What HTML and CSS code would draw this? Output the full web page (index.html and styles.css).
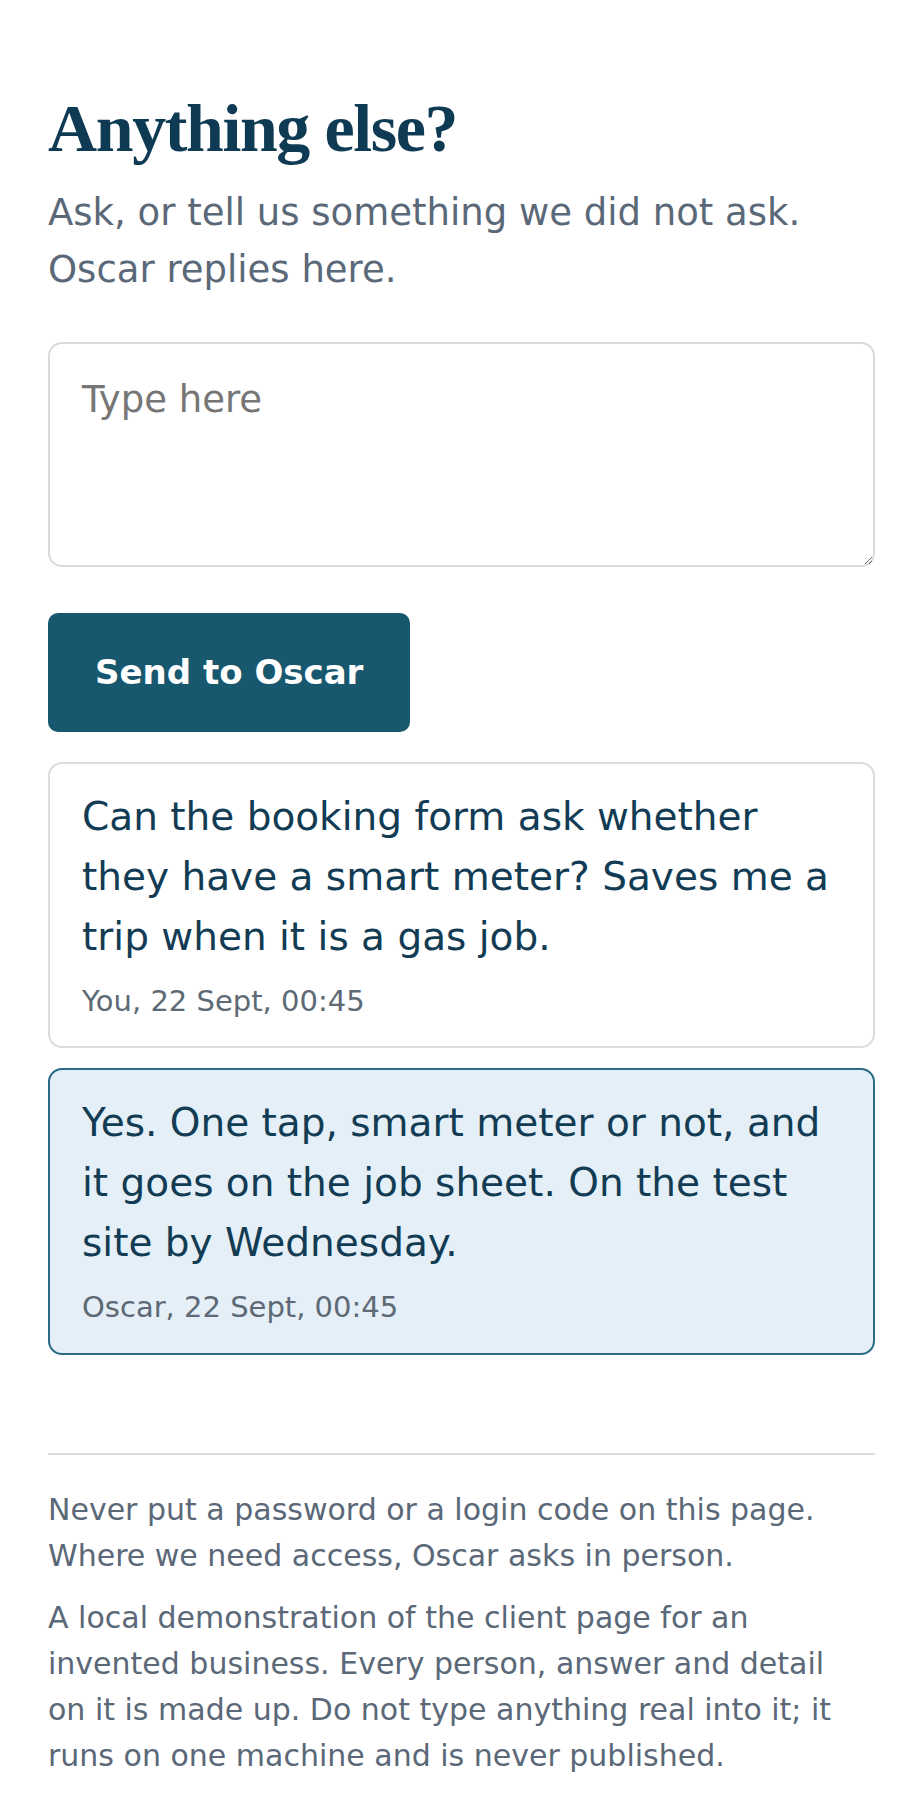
FILE: index.html
```html
<!DOCTYPE html>
<html lang="en">
<head>
<meta charset="utf-8">
<title>Anything else?</title>
<link rel="stylesheet" href="styles.css">
</head>
<body>
<main class="page">
  <h1 class="title">Anything else?</h1>
  <p class="lead">Ask, or tell us something we did not ask. Oscar replies here.</p>

  <form class="ask">
    <textarea class="ask-input" placeholder="Type here"></textarea>
    <button type="button" class="send">Send to Oscar</button>
  </form>

  <div class="thread">
    <div class="msg msg-you">
      <p class="msg-text">Can the booking form ask whether they have a smart meter? Saves me a trip when it is a gas job.</p>
      <p class="msg-meta">You, 22 Sept, 00:45</p>
    </div>
    <div class="msg msg-oscar">
      <p class="msg-text">Yes. One tap, smart meter or not, and it goes on the job sheet. On the test site by Wednesday.</p>
      <p class="msg-meta">Oscar, 22 Sept, 00:45</p>
    </div>
  </div>

  <footer class="foot">
    <p class="foot-text">Never put a password or a login code on this page. Where we need access, Oscar asks in person.</p>
    <p class="foot-text">A local demonstration of the client page for an invented business. Every person, answer and detail on it is made up. Do not type anything real into it; it runs on one machine and is never published.</p>
  </footer>
</main>
</body>
</html>
```
FILE: styles.css
```css
html, body {
  margin: 0;
  padding: 0;
  background: #ffffff;
}

body {
  font-family: "DejaVu Sans", "Noto Sans", sans-serif;
  color: #123b54;
}

.page {
  box-sizing: border-box;
  width: 923px;
  padding: 88px 48px 40px;
}

.title {
  margin: 0 0 14px;
  font-family: "Liberation Serif", "DejaVu Serif", serif;
  font-weight: 700;
  font-size: 68px;
  line-height: 1.2;
  letter-spacing: -1.4px;
  color: #0e3a53;
}

.lead {
  margin: 0;
  font-size: 37px;
  line-height: 57px;
  color: #5a6878;
}

.ask {
  margin: 44px 0 0;
  display: flex;
  flex-direction: column;
  align-items: flex-start;
}

.ask-input {
  box-sizing: border-box;
  display: block;
  width: 100%;
  height: 225px;
  margin: 0;
  padding: 28px 32px;
  border: 2px solid #dadada;
  border-radius: 14px;
  background: #ffffff;
  font-family: "DejaVu Sans", "Noto Sans", sans-serif;
  font-size: 37px;
  line-height: 1.5;
  color: #123b54;
  resize: vertical;
  outline: none;
}

.ask-input::placeholder {
  color: #767676;
  opacity: 1;
}

.send {
  box-sizing: border-box;
  margin-top: 46px;
  height: 119px;
  padding: 0 47px;
  border: none;
  border-radius: 10px;
  background: #17586f;
  color: #ffffff;
  font-family: "DejaVu Sans", "Noto Sans", sans-serif;
  font-weight: 700;
  font-size: 34px;
  line-height: 1;
  cursor: pointer;
}

.thread {
  margin-top: 30px;
  display: flex;
  flex-direction: column;
  gap: 20px;
}

.msg {
  padding: 23px 32px;
  border: 2px solid #dcdcdc;
  border-radius: 14px;
  background: #ffffff;
}

.msg-oscar {
  background: #e4eff7;
  border-color: #2a6c87;
}

.msg-text {
  margin: 0;
  font-size: 39px;
  line-height: 60px;
  color: #123b54;
}

.msg-meta {
  margin: 13px 0 0;
  font-size: 29px;
  line-height: 1.5;
  color: #5d6974;
}

.foot {
  margin-top: 98px;
  padding-top: 32px;
  border-top: 2px solid #dddddd;
}

.foot-text {
  max-width: 810px;
  margin: 0 0 16px;
  font-size: 30px;
  line-height: 46px;
  color: #5a6878;
}
```
